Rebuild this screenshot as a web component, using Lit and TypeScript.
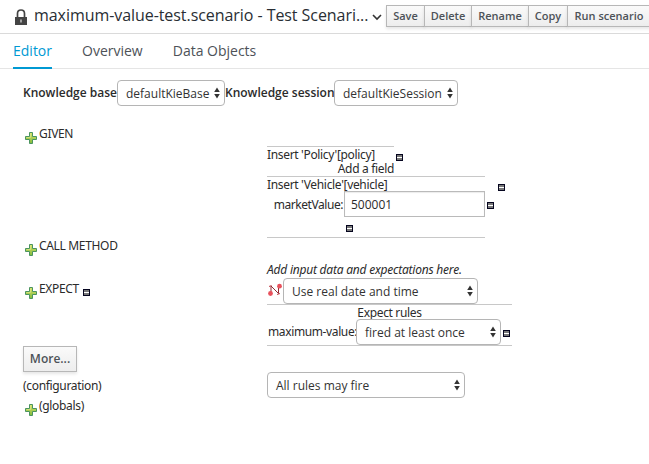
import { LitElement, html, css } from "lit";
import { customElement, property } from "lit/decorators.js";

@customElement("plus-icon")
class PlusIcon extends LitElement {
  static styles = css`:host { display: block; width: 12px; height: 12px; flex: none; } svg { display: block; }`;
  render() {
    return html`<svg width="12" height="12" viewBox="0 0 12 12">
      <defs><linearGradient id="g" x1="0" y1="0" x2="0" y2="1"><stop offset="0" stop-color="#dbe36a"/><stop offset="1" stop-color="#7fb93c"/></linearGradient></defs>
      <path d="M4.5 .5H7.5V4.5H11.5V7.5H7.5V11.5H4.5V7.5H.5V4.5H4.5Z" fill="url(#g)" stroke="#4a9460"/>
      <path d="M5.5 1.5V5.5H1.5" fill="none" stroke="#d9e88c" opacity=".7"/></svg>`;
  }
}

@customElement("minus-icon")
class MinusIcon extends LitElement {
  static styles = css`:host { display: block; width: 7px; height: 7px; flex: none; } svg { display: block; }`;
  render() {
    return html`<svg width="7" height="7" viewBox="0 0 7 7" shape-rendering="crispEdges"><rect width="7" height="7" fill="#05051f"/><rect x="1" y="1" width="5" height="5" fill="#777"/><rect x="1" y="3" width="5" height="1" fill="#fff"/></svg>`;
  }
}

@customElement("select-box")
class SelectBox extends LitElement {
  @property() label = "";
  static styles = css`
    :host { display: flex; align-items: center; justify-content: space-between; box-sizing: border-box; height: 26px; flex: none;
      border: 1px solid #b5b5b5; border-radius: 4px; padding: 1px 4px 0 8px; background: #fff; color: #333;
      font: 12px/17px "Open Sans", sans-serif; white-space: nowrap; }
    svg { display: block; flex: none; margin-top: -2px; }`;
  render() {
    return html`<span>${this.label}</span><svg width="6" height="12" viewBox="0 0 6 12"><path d="M.2 5L3 .5 5.8 5ZM.2 7L3 11.5 5.8 7Z" fill="#333"/></svg>`;
  }
}

@customElement("app-root")
class AppRoot extends LitElement {
  static styles = css`
    :host { display: block; width: 649px; height: 464px; overflow: hidden; background: #fff; color: #2b2b2b;
      font: 12px/15px "Noto Sans", sans-serif; white-space: nowrap; }
    header { display: flex; height: 33px; border-bottom: 1px solid #dadada; padding-left: 15px; }
    .lock { margin-top: 9px; width: 12px; flex: none; }
    h1 { margin: 3px 0 0 7px; width: 338px; font: 16px/24px "Open Sans", sans-serif; color: #292e34; letter-spacing: -.06px; flex: none; }
    .chev { margin-top: 14px; width: 10px; flex: none; }
    .buttons { display: flex; margin: 5px 0 0 4px; height: 22px; flex: none; }
    .btn { box-sizing: border-box; border: 1px solid #b7b7b7; margin-right: -1px; color: #4d5258; background: linear-gradient(#fafafa, #ededed);
      box-shadow: 0 2px 3px rgba(3, 3, 3, .1); font: 600 11px/20px "Open Sans", sans-serif; text-align: center; flex: none; }
    .save { width: 39px; } .delete { width: 48px; } .rename { width: 58px; } .copy { width: 40px; } .run { width: 84px; }
    .more { width: 54px; height: 26px; font-size: 12px; line-height: 23px; margin-top: 47px; }
    nav { display: flex; height: 34px; border-bottom: 1px solid #e5e5e5; padding-left: 13px; font: 14px/33px "Open Sans", sans-serif; color: #4d5258; }
    .tab { height: 35px; box-sizing: border-box; margin-right: 30px; }
    .active { color: #0099d3; border-bottom: 2px solid #0099d3; }
    .session { display: flex; margin: 11px 0 0 23px; font: 600 12px/25px "Open Sans", sans-serif; }
    .kbase { width: 94px; } .ksess { width: 109px; } .sbase { width: 108px; } .ssess { width: 124px; }
    .body { display: flex; padding-left: 23px; }
    .left { width: 244px; flex: none; padding-top: 20px; }
    .row { display: flex; align-items: flex-start; height: 18px; padding-left: 2px; }
    .row plus-icon { margin: 6px 2px 0 0; }
    .call { margin-top: 94px; } .expect { margin-top: 25px; }
    .expect minus-icon { margin: 8px 0 0 4px; }
    .t { letter-spacing: -.33px; }
    .config { margin-top: 6px; height: 15px; } .globals { margin-top: 5px; }
    .right { padding-top: 40px; }
    .policy { display: flex; height: 30px; }
    .ptext { width: 127px; border-top: 1px solid #c8c8c8; height: 30px; line-height: 14px; padding-top: 1px; box-sizing: border-box; }
    .add { text-align: right; }
    .policy minus-icon { margin: 8px 0 0 2px; }
    .vehicle { display: flex; height: 62px; }
    .vtext { box-sizing: border-box; width: 218px; height: 62px; border: 1px solid #c8c8c8; border-width: 1px 0; }
    .vtitle { height: 14px; line-height: 16px; }
    .field { display: flex; height: 26px; line-height: 27px; }
    .field .t { width: 77px; text-align: right; box-sizing: border-box; padding-right: 1px; flex: none; letter-spacing: -.45px; }
    .input { width: 141px; height: 26px; flex: none; box-sizing: border-box; border: 1px solid #bababa; box-shadow: inset 0 1px 1px rgba(3,3,3,.08); padding-left: 6px; font: 12px/25px "Open Sans", sans-serif; }
    .field minus-icon { margin: 11px 0 0 2px; }
    .vtext > minus-icon { margin: 8px 0 0 79px; }
    .vehicle > minus-icon { margin: 8px 0 0 13px; }
    .hint { height: 17px; line-height: 17px; margin-top: 23px; font-style: italic; letter-spacing: -.22px; }
    .time { display: flex; }
    .time svg { width: 16px; margin-top: 5px; }
    .stime { width: 195px; }
    .rules { width: 245px; box-sizing: border-box; height: 42px; border: 1px solid #c8c8c8; border-width: 1px 0; }
    .rtitle { text-align: center; height: 14px; line-height: 16px; }
    .rule { display: flex; line-height: 26px; }
    .rule .t { width: 88px; padding-left: 1px; letter-spacing: -.38px; }
    .srule { width: 145px; }
    .rule minus-icon { margin: 11px 0 0 2px; }
    .sconf { width: 198px; margin-top: 26px; }
  `;
  render() {
    return html`
      <header>
        <svg class="lock" width="12" height="17" viewBox="0 0 12 17"><path d="M2.500 9V4.500C2.500 2 4 1 6 1S9.500 2 9.500 4.500V9" fill="none" stroke="#444" stroke-width="1.700"/><rect y="8" width="12" height="8" fill="#444"/><path d="M5.300 10.500h1.400v3H5.300Z" fill="#ccc"/></svg>
        <h1>maximum-value-test.scenario - Test Scenari...</h1>
        <svg class="chev" width="10" height="7" viewBox="0 0 10 7"><path d="M1 1L5 5L9 1" fill="none" stroke="#333" stroke-width="1.600"/></svg>
        <div class="buttons">
          <div class="btn save">Save</div><div class="btn delete">Delete</div><div class="btn rename">Rename</div><div class="btn copy">Copy</div><div class="btn run">Run scenario</div>
        </div>
      </header>
      <nav><div class="tab active">Editor</div><div class="tab">Overview</div><div class="tab">Data Objects</div></nav>
      <div class="session">
        <span class="kbase">Knowledge base</span><select-box class="sbase" label="defaultKieBase"></select-box>
        <span class="ksess">Knowledge session</span><select-box class="ssess" label="defaultKieSession"></select-box>
      </div>
      <div class="body">
        <div class="left">
          <div class="row"><plus-icon></plus-icon><span class="t">GIVEN</span></div>
          <div class="row call"><plus-icon></plus-icon><span class="t">CALL METHOD</span></div>
          <div class="row expect"><plus-icon></plus-icon><span class="t">EXPECT</span><minus-icon></minus-icon></div>
          <div class="btn more">More...</div>
          <div class="config t">(configuration)</div>
          <div class="row globals"><plus-icon></plus-icon><span class="t">(globals)</span></div>
        </div>
        <div class="right">
          <div class="policy">
            <div class="ptext"><div class="t">Insert 'Policy'[policy]</div><div class="t add">Add a field</div></div>
            <minus-icon></minus-icon>
          </div>
          <div class="vehicle">
            <div class="vtext">
              <div class="vtitle t">Insert 'Vehicle'[vehicle]</div>
              <div class="field"><span class="t">marketValue:</span><div class="input">500001</div><minus-icon></minus-icon></div>
              <minus-icon></minus-icon>
            </div>
            <minus-icon></minus-icon>
          </div>
          <div class="hint">Add input data and expectations here.</div>
          <div class="time">
            <svg width="16" height="15" viewBox="0 0 16 15"><path d="M4 10.500V3L11.500 10.500V4" fill="none" stroke="#8f2b33" stroke-width="1"/><circle cx="3.500" cy="10.500" r="2.400" fill="#e8515c"/><circle cx="12.500" cy="3.200" r="2.400" fill="#e8515c"/><path d="M2 3.500L4.500 2.500M10 11.500L13 10.500" stroke="#c2404a"/></svg>
            <select-box class="stime" label="Use real date and time"></select-box>
          </div>
          <div class="rules">
            <div class="rtitle t">Expect rules</div>
            <div class="rule"><span class="t">maximum-value:</span><select-box class="srule" label="fired at least once"></select-box><minus-icon></minus-icon></div>
          </div>
          <select-box class="sconf" label="All rules may fire"></select-box>
        </div>
      </div>`;
  }
}
